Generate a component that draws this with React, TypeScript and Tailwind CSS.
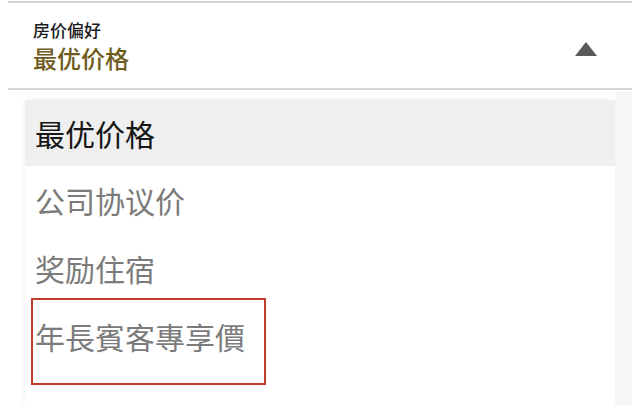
import React from "react";

const font = { fontFamily: '"Noto Sans CJK SC", "Noto Sans CJK TC", "Noto Sans", sans-serif' };

export default function App() {
  const items = ["公司协议价", "奖励住宿", "年長賓客專享價"];
  return (
    <div className="w-[640px] h-[405px] bg-white overflow-hidden relative" style={font}>
      <div className="mx-[8px] mt-[1px] border-t-2 border-[#d2d2d2]">
        <div className="h-[85px] flex items-center justify-between pl-[25px] pr-[35px]">
          <div className="flex flex-col gap-[3px] mt-[2px]">
            <div className="text-[17px] leading-[20px] font-medium text-[#1c1c1c]">房价偏好</div>
            <div className="text-[24px] leading-[30px] font-medium text-[#6f5b1c]">最优价格</div>
          </div>
          <svg width="22" height="14" viewBox="0 0 22 14" className="mt-[7px]">
            <polygon points="11,0 22,14 0,14" fill="#5a5a5a" />
          </svg>
        </div>
        <div className="border-t-2 border-[#d6d6d6]" />
      </div>
      <div className="flex pl-[25px] mt-[10px]">
        <div className="w-[590px] bg-white shadow-[0_0_5px_rgba(0,0,0,0.07)] flex flex-col">
          <div className="h-[66px] bg-[#efefef] flex items-center pl-[10px] text-[30px] text-[#161616]">最优价格</div>
          {items.map((t) => (
            <div key={t} className="h-[68px] flex items-center pl-[10px] text-[30px] text-[#7b7b7b]">{t}</div>
          ))}
        </div>
        <div className="w-[17px] h-[320px] bg-[#f6f6f6] mt-[-8px]" />
      </div>
      <div className="absolute left-[31px] top-[298px] w-[235px] h-[87px] border-2 border-[#c43a2c]" />
    </div>
  );
}
